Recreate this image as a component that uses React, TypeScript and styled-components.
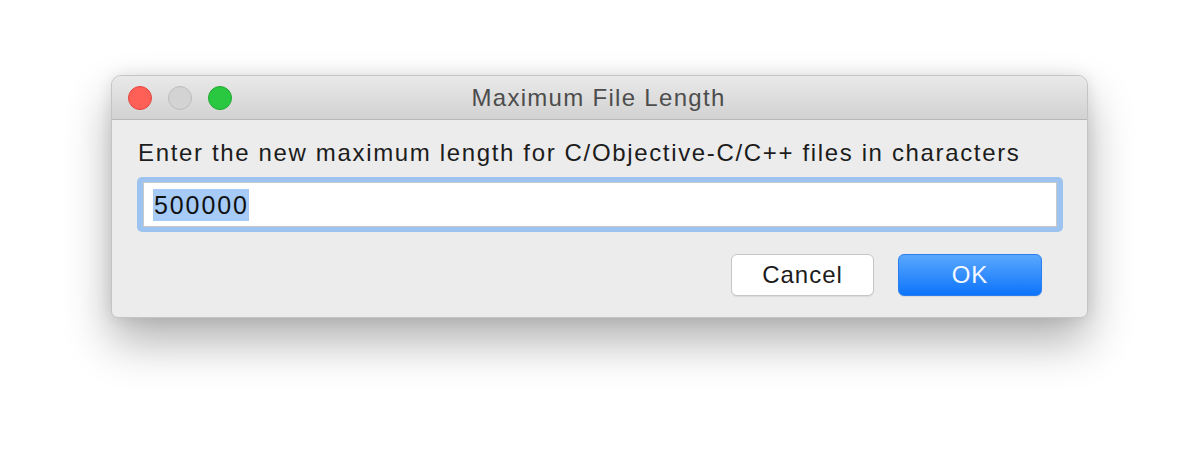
import React from 'react';
import styled, { createGlobalStyle } from 'styled-components';

const GlobalStyle = createGlobalStyle`
  html, body {
    margin: 0;
    padding: 0;
    background: #ffffff;
  }
  body {
    font-family: 'Liberation Sans', Arial, sans-serif;
  }
`;

const Page = styled.div`
  width: 1200px;
  height: 466px;
  padding: 75px 0 0 111px;
  box-sizing: border-box;
  overflow: hidden;
`;

const Window = styled.div`
  width: 977px;
  height: 243px;
  box-sizing: border-box;
  border-radius: 10px 10px 7px 7px;
  border: 1px solid #c4c4c4;
  background: #ececec;
  box-shadow: 0 24px 46px rgba(0, 0, 0, 0.3), 0 0 16px rgba(0, 0, 0, 0.1);
  overflow: hidden;
  display: flex;
  flex-direction: column;
`;

const TitleBar = styled.div`
  position: relative;
  height: 43px;
  flex-shrink: 0;
  background: linear-gradient(#e9e9e9, #d2d2d2);
  border-bottom: 1px solid #b8b8b8;
  display: flex;
  align-items: center;
  justify-content: center;
`;

const Lights = styled.div`
  position: absolute;
  left: 16px;
  top: 10px;
  display: flex;
  gap: 16px;
`;

const Light = styled.span<{ $fill: string; $edge: string }>`
  width: 24px;
  height: 24px;
  box-sizing: border-box;
  border-radius: 50%;
  background: ${({ $fill }) => $fill};
  border: 1px solid ${({ $edge }) => $edge};
`;

const Title = styled.div`
  font-size: 24px;
  letter-spacing: 1.3px;
  color: #4d4d4d;
  margin-left: -2px;
`;

const Content = styled.div`
  padding: 19px 24px 0 25px;
  display: flex;
  flex-direction: column;
`;

const Prompt = styled.div`
  font-size: 24px;
  letter-spacing: 1.65px;
  color: #1c1c1c;
  padding-left: 1px;
  line-height: 28px;
  white-space: nowrap;
`;

const FieldRing = styled.div`
  margin-top: 10px;
  height: 55px;
  box-sizing: border-box;
  border-radius: 5px;
  background: #9dc4f1;
  padding: 5px 6px 5px 6px;
`;

const Field = styled.div`
  height: 100%;
  box-sizing: border-box;
  background: #ffffff;
  border: 1px solid #c9c9c9;
  display: flex;
  align-items: center;
  padding-left: 9px;
`;

const Selected = styled.span`
  background: #a6cbf7;
  color: #111111;
  font-size: 25px;
  letter-spacing: 1.9px;
  line-height: 32px;
  padding: 0 0 0 1px;
`;

const Actions = styled.div`
  display: flex;
  justify-content: flex-end;
  gap: 24px;
  margin-top: 22px;
  padding-right: 21px;
`;

const Button = styled.button<{ $primary?: boolean }>`
  width: ${({ $primary }) => ($primary ? '144px' : '143px')};
  height: 42px;
  box-sizing: border-box;
  border-radius: 6px;
  font-family: 'Liberation Sans', Arial, sans-serif;
  font-size: 24px;
  letter-spacing: 1px;
  padding: 0;
  border: 1px solid ${({ $primary }) => ($primary ? '#2a7ef0' : '#c6c6c6')};
  background: ${({ $primary }) =>
    $primary ? 'linear-gradient(#5aa8fd, #0d74fb)' : '#ffffff'};
  color: ${({ $primary }) => ($primary ? '#f4f8ff' : '#1c1c1c')};
  box-shadow: 0 1px 1px rgba(0, 0, 0, 0.08);
`;

export default function App() {
  return (
    <>
      <GlobalStyle />
      <Page>
        <Window>
          <TitleBar>
            <Lights>
              <Light $fill="#fe5f57" $edge="#e2463f" />
              <Light $fill="#d3d3d3" $edge="#bdbdbd" />
              <Light $fill="#29c840" $edge="#1eaa2f" />
            </Lights>
            <Title>Maximum File Length</Title>
          </TitleBar>
          <Content>
            <Prompt>Enter the new maximum length for C/Objective-C/C++ files in characters</Prompt>
            <FieldRing>
              <Field>
                <Selected>500000</Selected>
              </Field>
            </FieldRing>
            <Actions>
              <Button>Cancel</Button>
              <Button $primary>OK</Button>
            </Actions>
          </Content>
        </Window>
      </Page>
    </>
  );
}
